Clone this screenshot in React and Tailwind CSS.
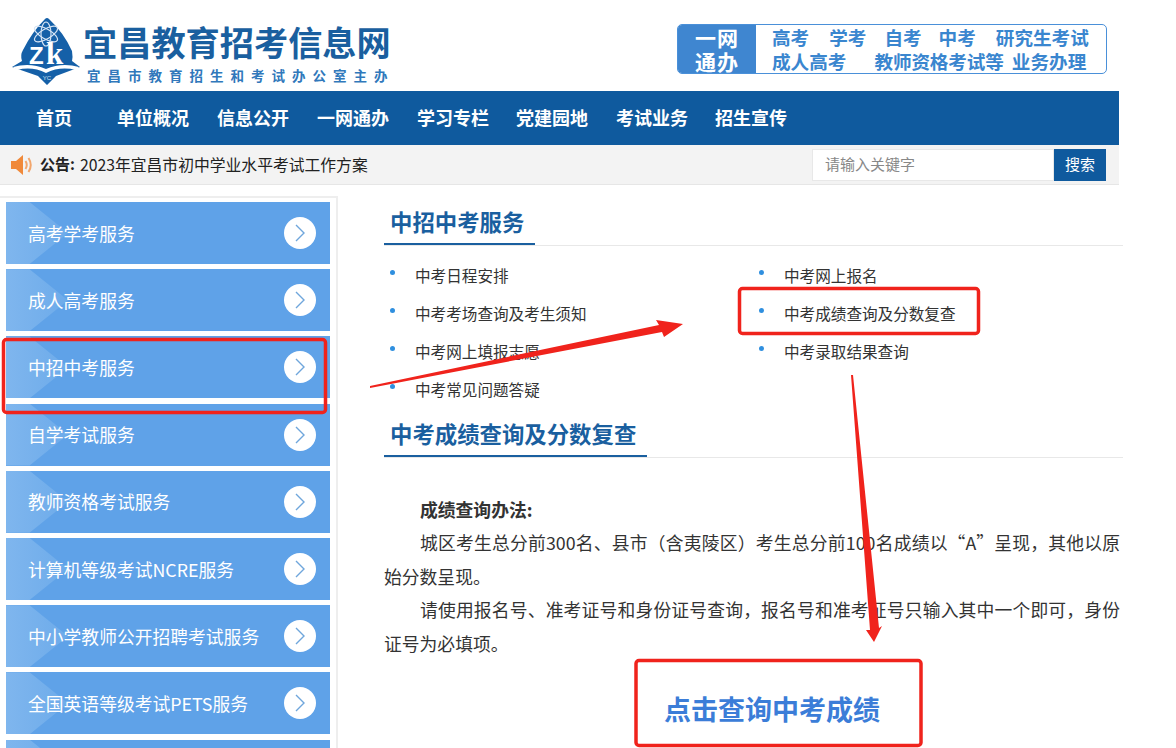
import React from "react";

const side = ["高考学考服务","成人高考服务","中招中考服务","自学考试服务","教师资格考试服务","计算机等级考试NCRE服务","中小学教师公开招聘考试服务","全国英语等级考试PETS服务",""];
const nav = [["首页","w-[81px]"],["单位概况","w-[100px]"],["信息公开","w-[100px]"],["一网通办","w-[100px]"],["学习专栏","w-[99px]"],["党建园地","w-[100px]"],["考试业务","w-[99px]"],["招生宣传","w-[72px]"]];

function Logo() {
  return (
    <svg width="72" height="72" viewBox="0 0 72 72" className="shrink-0">
      <path d="M35 2 Q37 0 39 2 Q54 16 62 34 Q63 40 62 44 L70 50 L46 59 L37 68 L28 59 L2 50 L12 44 Q10 38 13 33 Q22 15 35 2 Z" fill="#1560a8" />
      <path d="M3 50 Q20 45 36 52 Q52 45 69 50 L66 53 Q50 49 36 56 Q22 49 7 53 Z" fill="#fff" />
      <g fill="none" stroke="#d5e4f4" strokeWidth="1.2">
        <ellipse cx="36" cy="17" rx="13" ry="5" transform="rotate(30 36 17)" />
        <ellipse cx="36" cy="17" rx="13" ry="5" transform="rotate(-30 36 17)" />
        <ellipse cx="36" cy="17" rx="5" ry="12" />
      </g>
      <text x="19" y="47" fill="#fff" fontFamily="Liberation Sans" fontWeight="700" fontSize="24">Z</text>
      <text x="36" y="47" fill="#fff" fontFamily="Liberation Serif" fontWeight="700" fontSize="31">k</text>
      <text x="37" y="63" textAnchor="middle" fill="#cfe0f2" fontFamily="Liberation Sans" fontSize="6">YC</text>
    </svg>
  );
}

function Speaker() {
  return (
    <svg width="24" height="22" viewBox="0 0 24 22" className="shrink-0">
      <path d="M1 7 H6 L13 1 V21 L6 15 H1 Z" fill="#f0893a" />
      <path d="M15.5 7 Q18 11 15.5 15" fill="none" stroke="#f2a66c" strokeWidth="2" />
      <path d="M18.5 4 Q23 11 18.5 18" fill="none" stroke="#f2a66c" strokeWidth="2" />
    </svg>
  );
}

function SideItem({ label }) {
  return (
    <div className="relative h-[62px] w-[324px] bg-[#5fa2e8] mb-[5.2px] flex items-center pl-[22px] pr-[14px] justify-between overflow-hidden shrink-0">
      <div className="absolute inset-0 w-[62px] bg-gradient-to-r from-[#7fb6ee] to-[#6dabea] [clip-path:polygon(0_0,38%_0,100%_50%,38%_100%,0_100%)]" />
      <span className="relative text-white text-[17.8px] whitespace-nowrap">{label}</span>
      <span className="relative w-8 h-8 rounded-full bg-white flex items-center justify-center">
        <svg width="14" height="20" viewBox="0 0 14 20"><path d="M3 2 L11 10 L3 18" fill="none" stroke="#6fa6dc" strokeWidth="1.4" /></svg>
      </span>
    </div>
  );
}

function Heading({ children, w }) {
  return (
    <div className="border-b border-[#e8e8e8] h-[50px] relative">
      <h2 className="pl-[6px] text-[22.4px] leading-[51px] font-bold text-[#1a5f9f] whitespace-nowrap">{children}</h2>
      <div className={`absolute left-0 bottom-0 h-[2px] bg-[#1a5f9f] ${w}`} />
    </div>
  );
}

function Li({ children }) {
  return (
    <li className="h-[38px] flex items-center text-[15.6px] text-[#333] whitespace-nowrap">
      <span className="w-[5px] h-[5px] rounded-full bg-[#2f8fdf] ml-[6px] mr-[20px] -mt-[8px]" />
      {children}
    </li>
  );
}

function Annotations() {
  return (
    <svg className="absolute inset-0 pointer-events-none" width="1176" height="748" viewBox="0 0 1176 748">
      <g fill="none" stroke="#f0231c" strokeWidth="3.5">
        <rect x="3.5" y="339.5" width="322" height="73" rx="3" />
        <rect x="739.5" y="288.5" width="239" height="45" rx="3" />
        <rect x="636" y="660.5" width="285" height="85" rx="3" />
      </g>
      <path d="M370 386 L659 325 L656 320 L683 324 L664 337 L662 332 L370 388 Z" fill="#f0231c" />
      <path d="M851 375 L853 375 L879 628 L882 626 L874 642 L866 630 L870 630 Z" fill="#f0231c" />
    </svg>
  );
}

export default function App() {
  return (
    <div className="relative w-[1176px] h-[748px] overflow-hidden bg-white font-['Noto_Sans_CJK_SC','Noto_Sans',sans-serif]">
      <div className="w-[1119px]">
        <header className="h-[91px] flex items-start justify-between pr-[12px]">
          <div className="flex pl-[10px] pt-[17px]">
            <Logo />
            <div className="ml-[1px]">
              <div className="text-[34.2px] leading-[44px] mt-[2px] font-bold text-[#1a5f9f] whitespace-nowrap">宜昌教育招考信息网</div>
              <div className="text-[13.5px] leading-[18px] mt-[3px] ml-[4px] font-bold tracking-[7px] text-[#3078bb] whitespace-nowrap">宜昌市教育招生和考试办公室主办</div>
            </div>
          </div>
          <div className="mt-[24px] w-[430px] h-[50px] border border-[#4a90d9] rounded-[5px] flex">
            <div className="w-[78px] bg-[#3f86d0] rounded-l-[4px] text-white text-[21px] leading-[24px] font-bold text-center tracking-[1px]">一网<br />通办</div>
            <div className="flex-1 pl-[16px] text-[#3a86cf] text-[18.6px] leading-[24px] font-bold whitespace-nowrap">
              <div className="flex">
                <span>高考</span><span className="ml-[20px]">学考</span><span className="ml-[18px]">自考</span><span className="ml-[17px]">中考</span><span className="ml-[20px]">研究生考试</span>
              </div>
              <div className="flex">
                <span>成人高考</span><span className="ml-[28px] tracking-[-0.1px]">教师资格考试等</span><span className="ml-[8px]">业务办理</span>
              </div>
            </div>
          </div>
        </header>
        <nav className="h-[54px] bg-[#0f5a9e] flex items-center pl-[36px] pb-[1px]">
          {nav.map(([t, w]) => (
            <a key={t} className={`${w} text-white text-[18px] font-bold whitespace-nowrap`}>{t}</a>
          ))}
        </nav>
        <div className="h-[40px] bg-[#f3f3f3] border-b border-[#e6e6e6] flex items-center justify-between pl-[10px] pr-[13px]">
          <div className="flex items-center text-[15px] text-[#222] whitespace-nowrap">
            <Speaker />
            <b className="ml-[6px] mr-[5px]">公告:</b>
            <span className="text-[15.8px]">2023年宜昌市初中学业水平考试工作方案</span>
          </div>
          <div className="flex h-[32px]">
            <div className="w-[242px] bg-white border border-[#e8e8e8] pl-[12px] text-[15px] leading-[28px] text-[#888]">请输入关键字</div>
            <button className="w-[52px] bg-[#0f5a9e] text-white text-[15px]">搜索</button>
          </div>
        </div>
      </div>
      <div className="flex items-start mt-[11px]">
        <aside className="w-[338px] h-[600px] border-t-2 border-r-2 border-[#eeeeee] pl-[6px] pt-[4px] shrink-0">
          {side.map((s, i) => <SideItem key={i} label={s} />)}
        </aside>
        <main className="ml-[46px] w-[739px]">
          <Heading w="w-[151px]">中招中考服务</Heading>
          <div className="grid mt-[11px] mb-[-1px] w-[739px] [grid-template-columns:369px_370px]">
            <ul>
              <Li>中考日程安排</Li>
              <Li>中考考场查询及考生须知</Li>
              <Li>中考网上填报志愿</Li>
              <Li>中考常见问题答疑</Li>
            </ul>
            <ul>
              <Li>中考网上报名</Li>
              <Li>中考成绩查询及分数复查</Li>
              <Li>中考录取结果查询</Li>
            </ul>
          </div>
          <Heading w="w-[263px]">中考成绩查询及分数复查</Heading>
          <div className="mt-[34.5px] text-[17.8px] leading-[33.5px] text-[#333] w-[736px] text-justify">
            <p className="indent-[36px] font-bold">成绩查询办法:</p>
            <p className="indent-[36px]">城区考生总分前300名、县市（含夷陵区）考生总分前100名成绩以“A”呈现，其他以原始分数呈现。</p>
            <p className="indent-[36px]">请使用报名号、准考证号和身份证号查询，报名号和准考证号只输入其中一个即可，身份证号为必填项。</p>
          </div>
          <div className="mt-[29px] ml-[280px] text-[27px] leading-[40px] font-bold text-[#3b7dd8] whitespace-nowrap">点击查询中考成绩</div>
        </main>
      </div>
      <Annotations />
    </div>
  );
}
